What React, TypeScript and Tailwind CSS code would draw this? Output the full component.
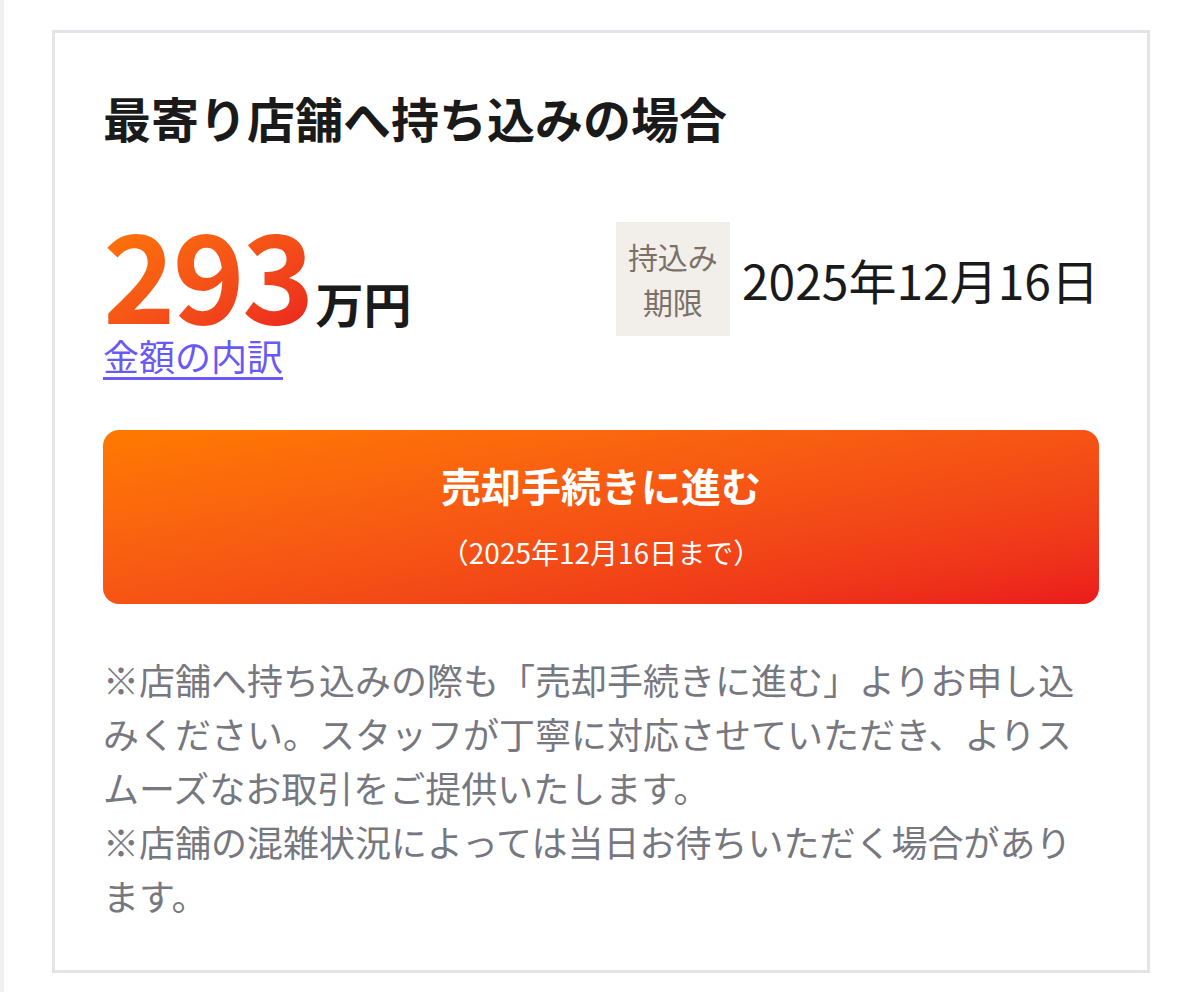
const font = "font-['Noto_Sans_CJK_JP','Noto_Sans',sans-serif]";

function DeadlineBadge() {
  return (
    <div className="flex h-[114px] w-[114px] flex-col items-center justify-center bg-[#f2efeb] text-[30px] leading-[45px] text-[#7a7169]">
      <span>持込み</span>
      <span>期限</span>
    </div>
  );
}

export default function App() {
  return (
    <div className={`flex min-h-screen bg-white ${font}`}>
      <div className="w-1 shrink-0 bg-[#f0f0f2]" />
      <div className="pl-12 pt-[30px]">
        <div className="w-[1098px] border-[3px] border-[#e4e4e8] bg-white px-12 pt-12 pb-12">
          <h2 className="text-[48px] font-bold leading-[1.5] text-[#1a1a1a]">
            最寄り店舗へ持ち込みの場合
          </h2>

          <div className="mt-14 flex items-start justify-between">
            <div>
              <div className="flex items-end">
                <span className="bg-gradient-to-br from-[#ff7a00] to-[#eb1f1f] bg-clip-text text-[123px] font-bold leading-none tracking-tight text-transparent">
                  293
                </span>
                <span className="ml-1 text-[48px] font-bold leading-[1.2] text-[#1a1a1a]">
                  万円
                </span>
              </div>
              <a
                href="#"
                className="mt-[5px] block w-fit text-[36px] leading-none text-[#6a58f8] underline underline-offset-[6px]"
              >
                金額の内訳
              </a>
            </div>

            <div className="mt-[13px] flex items-center gap-3">
              <DeadlineBadge />
              <span className="text-[48px] leading-none text-[#1a1a1a]">
                2025年12月16日
              </span>
            </div>
          </div>

          <button className="mt-[57px] flex h-[174px] w-full flex-col items-center justify-center rounded-2xl bg-gradient-to-br from-[#ff7a00] to-[#eb1a1c] pb-[6px] text-white">
            <span className="text-[40px] font-bold leading-[1.5]">
              売却手続きに進む
            </span>
            <span className="mt-4 text-[28px] leading-[1.5]">
              （2025年12月16日まで）
            </span>
          </button>

          <div className="mt-12 text-[36px] leading-[54px] text-[#77777f]">
            <p>
              ※店舗へ持ち込みの際も「売却手続きに進む」よりお申し込みください。スタッフが丁寧に対応させていただき、よりスムーズなお取引をご提供いたします。
            </p>
            <p>※店舗の混雑状況によっては当日お待ちいただく場合があります。</p>
          </div>
        </div>
      </div>
    </div>
  );
}
